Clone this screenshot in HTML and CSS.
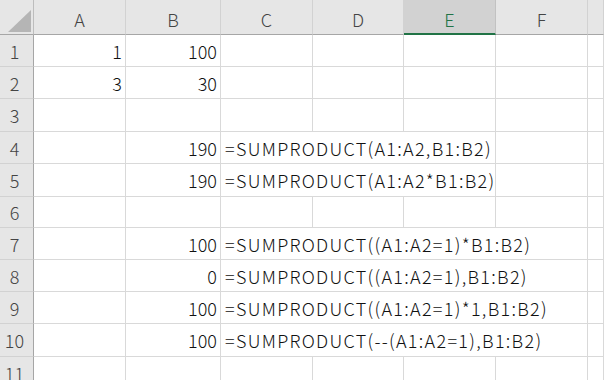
FILE: index.html
```html
<!DOCTYPE html>
<html lang="ja">

<head>
    <meta charset="UTF-8">
    <meta name="viewport" content="width=device-width, initial-scale=1.0">
    <title>SUMPRODUCT</title>
    <link rel="stylesheet" href="styles.css">
</head>

<body>
    <div class="sheet">
        <!-- column headers -->
        <div class="corner"><span class="corner-tri"></span></div>
        <div class="col-head">A</div>
        <div class="col-head">B</div>
        <div class="col-head">C</div>
        <div class="col-head">D</div>
        <div class="col-head selected">E</div>
        <div class="col-head">F</div>
        <div class="col-head last"></div>

        <!-- row 1 -->
        <div class="row-head">1</div>
        <div class="cell num">1</div>
        <div class="cell num">100</div>
        <div class="cell"></div>
        <div class="cell"></div>
        <div class="cell"></div>
        <div class="cell"></div>
        <div class="cell"></div>

        <!-- row 2 -->
        <div class="row-head">2</div>
        <div class="cell num">3</div>
        <div class="cell num">30</div>
        <div class="cell"></div>
        <div class="cell"></div>
        <div class="cell"></div>
        <div class="cell"></div>
        <div class="cell"></div>

        <!-- row 3 -->
        <div class="row-head">3</div>
        <div class="cell"></div>
        <div class="cell"></div>
        <div class="cell"></div>
        <div class="cell"></div>
        <div class="cell"></div>
        <div class="cell"></div>
        <div class="cell"></div>

        <!-- row 4 -->
        <div class="row-head">4</div>
        <div class="cell"></div>
        <div class="cell num">190</div>
        <div class="cell text span3">=SUMPRODUCT(A1:A2,B1:B2)</div>
        <div class="cell"></div>
        <div class="cell"></div>

        <!-- row 5 -->
        <div class="row-head">5</div>
        <div class="cell"></div>
        <div class="cell num">190</div>
        <div class="cell text span3">=SUMPRODUCT(A1:A2*B1:B2)</div>
        <div class="cell"></div>
        <div class="cell"></div>

        <!-- row 6 -->
        <div class="row-head">6</div>
        <div class="cell"></div>
        <div class="cell"></div>
        <div class="cell"></div>
        <div class="cell"></div>
        <div class="cell"></div>
        <div class="cell"></div>
        <div class="cell"></div>

        <!-- row 7 -->
        <div class="row-head">7</div>
        <div class="cell"></div>
        <div class="cell num">100</div>
        <div class="cell text span4">=SUMPRODUCT((A1:A2=1)*B1:B2)</div>
        <div class="cell"></div>

        <!-- row 8 -->
        <div class="row-head">8</div>
        <div class="cell"></div>
        <div class="cell num">0</div>
        <div class="cell text span4">=SUMPRODUCT((A1:A2=1),B1:B2)</div>
        <div class="cell"></div>

        <!-- row 9 -->
        <div class="row-head">9</div>
        <div class="cell"></div>
        <div class="cell num">100</div>
        <div class="cell text span4">=SUMPRODUCT((A1:A2=1)*1,B1:B2)</div>
        <div class="cell"></div>

        <!-- row 10 -->
        <div class="row-head">10</div>
        <div class="cell"></div>
        <div class="cell num">100</div>
        <div class="cell text span4">=SUMPRODUCT(--(A1:A2=1),B1:B2)</div>
        <div class="cell"></div>

        <!-- row 11 -->
        <div class="row-head">11</div>
        <div class="cell"></div>
        <div class="cell"></div>
        <div class="cell"></div>
        <div class="cell"></div>
        <div class="cell"></div>
        <div class="cell"></div>
        <div class="cell"></div>
    </div>
</body>

</html>
```

FILE: styles.css
```css
body {
    margin: 0;
    background-color: #ffffff;
    overflow: hidden;
    font-family: "Noto Sans CJK JP", "Noto Sans", sans-serif;
}

.sheet {
    display: grid;
    grid-template-columns: 34px 92px 95px 92px 91px 92px 92px 1fr;
    grid-template-rows: 35px 32px 32px 33px 32px 33px 31px 32px 32px 32px 33px 32px;
    width: 100%;
    height: 380px;
    overflow: hidden;
}

.corner {
    background-color: #e6e6e6;
    border-right: 1px solid #bdbdbd;
    border-bottom: 1px solid #a6a6a6;
    position: relative;
}

.corner-tri {
    position: absolute;
    left: 8px;
    top: 10px;
    width: 0;
    height: 0;
    border-left: 23px solid transparent;
    border-bottom: 22px solid #b5b5b5;
}

.col-head {
    background-color: #e6e6e6;
    border-right: 1px solid #d2d2d2;
    border-bottom: 1px solid #a6a6a6;
    color: #444444;
    font-size: 18px;
    font-weight: 300;
    display: flex;
    align-items: center;
    justify-content: center;
    padding-top: 4px;
}

.col-head.selected {
    background-color: #d2d2d2;
    color: #217346;
    border-bottom: 2px solid #217346;
    border-right-color: #c2c2c2;
}

.row-head {
    background-color: #e6e6e6;
    border-right: 1px solid #a6a6a6;
    border-bottom: 1px solid #d2d2d2;
    color: #444444;
    font-size: 18px;
    font-weight: 300;
    display: flex;
    align-items: center;
    justify-content: center;
    padding-right: 4px;
}

.cell {
    border-right: 1px solid #d9d9d9;
    border-bottom: 1px solid #d9d9d9;
    color: #111111;
    font-size: 18px;
    font-weight: 300;
    display: flex;
    align-items: center;
    white-space: nowrap;
    overflow: hidden;
}

.cell.num {
    justify-content: flex-end;
    padding-right: 3px;
}

.cell.text {
    padding-left: 4px;
    letter-spacing: 1.3px;
    overflow: visible;
}

.span3 {
    grid-column: span 3;
}

.span4 {
    grid-column: span 4;
}
```
